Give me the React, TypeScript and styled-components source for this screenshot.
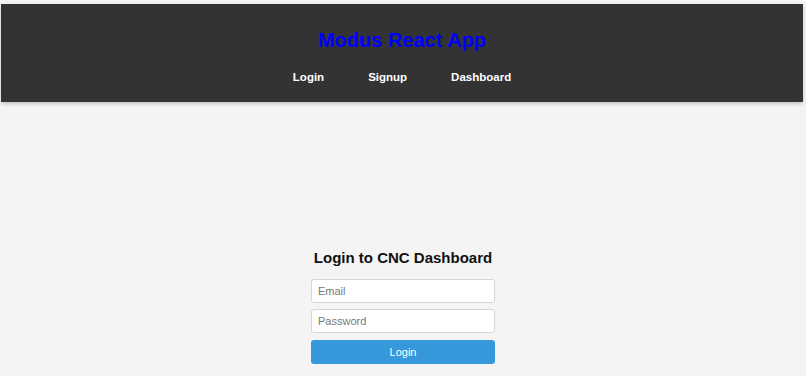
import React, { useState } from 'react';
import styled, { createGlobalStyle } from 'styled-components';

const GlobalStyle = createGlobalStyle`
  html, body {
    margin: 0;
    padding: 0;
    background-color: #f4f4f4;
    font-family: 'Liberation Sans', Arial, sans-serif;
  }
`;

const Header = styled.header`
  margin: 4px 3px 0 1px;
  height: 98px;
  box-sizing: border-box;
  padding-top: 24px;
  background-color: #333333;
  box-shadow: 0 2px 4px rgba(0, 0, 0, 0.2);
  text-align: center;
`;

const AppTitle = styled.h1`
  margin: 0;
  font-size: 20px;
  line-height: 24px;
  color: #0000ff;
`;

const Nav = styled.nav`
  display: flex;
  justify-content: center;
  gap: 44px;
  margin-top: 18px;
`;

const NavLink = styled.a`
  color: #ffffff;
  font-weight: bold;
  font-size: 11.5px;
  line-height: 14px;
  text-decoration: none;
  cursor: pointer;
`;

const Main = styled.main`
  display: flex;
  justify-content: center;
  padding-top: 146px;
`;

const Form = styled.form`
  display: flex;
  flex-direction: column;
  align-items: center;
  width: 184px;
`;

const FormTitle = styled.h2`
  margin: 0 0 11px;
  font-size: 15px;
  line-height: 20px;
  color: #111111;
  white-space: nowrap;
`;

const Input = styled.input`
  width: 100%;
  height: 24px;
  box-sizing: border-box;
  padding: 0 6px;
  margin-bottom: 6px;
  border: 1px solid #d6d6d6;
  border-radius: 3px;
  background: #ffffff;
  font-family: 'Liberation Sans', Arial, sans-serif;
  font-size: 11px;
  color: #333;

  &::placeholder {
    color: #777;
  }
`;

const SubmitButton = styled.button`
  width: 100%;
  height: 24px;
  margin-top: 1px;
  border: none;
  border-radius: 3px;
  background-color: #3498db;
  color: #ffffff;
  font-family: 'Liberation Sans', Arial, sans-serif;
  font-size: 11px;
  cursor: pointer;
`;

const App: React.FC = () => {
  const [email, setEmail] = useState('');
  const [password, setPassword] = useState('');

  return (
    <>
      <GlobalStyle />
      <Header>
        <AppTitle>Modus React App</AppTitle>
        <Nav>
          <NavLink>Login</NavLink>
          <NavLink>Signup</NavLink>
          <NavLink>Dashboard</NavLink>
        </Nav>
      </Header>
      <Main>
        <Form onSubmit={(e) => e.preventDefault()}>
          <FormTitle>Login to CNC Dashboard</FormTitle>
          <Input
            type="email"
            placeholder="Email"
            value={email}
            onChange={(e) => setEmail(e.target.value)}
          />
          <Input
            type="password"
            placeholder="Password"
            value={password}
            onChange={(e) => setPassword(e.target.value)}
          />
          <SubmitButton type="submit">Login</SubmitButton>
        </Form>
      </Main>
    </>
  );
};

export default App;
